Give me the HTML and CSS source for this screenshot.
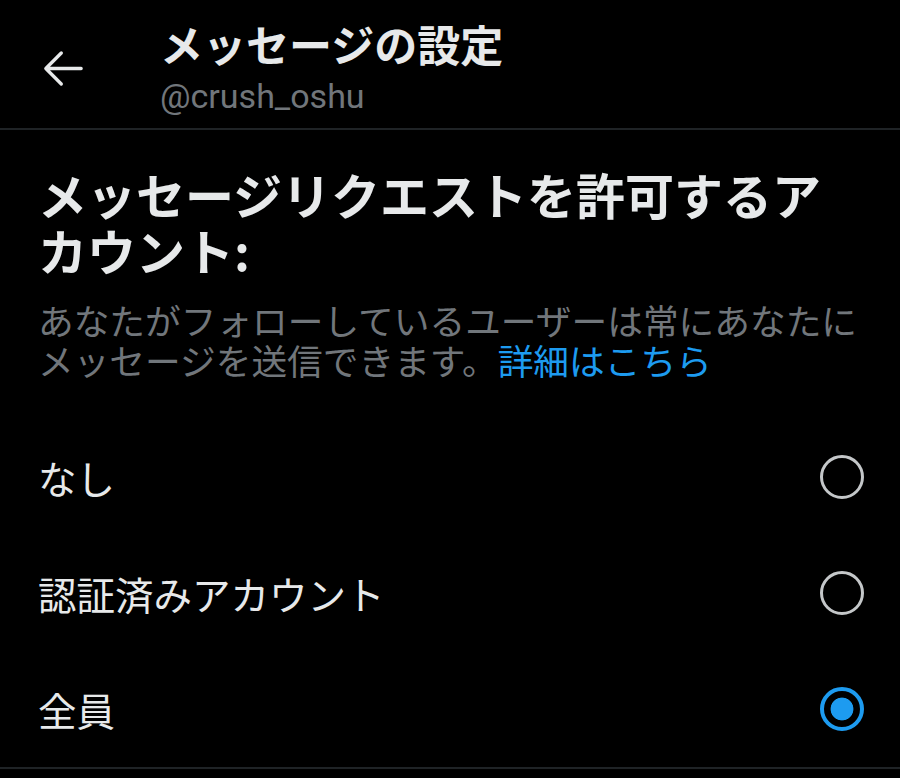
FILE: index.html
```html
<!DOCTYPE html>
<html lang="ja">
<head>
<meta charset="utf-8">
<title>メッセージの設定</title>
<link rel="stylesheet" href="styles.css">
</head>
<body>
<header class="topbar">
  <button class="back" aria-label="戻る">
    <svg viewBox="0 0 24 24" width="53" height="53"><path d="M20 12H4.5M11 5l-7 7 7 7" fill="none" stroke="currentColor" stroke-width="1.5" stroke-linecap="round" stroke-linejoin="round"/></svg>
  </button>
  <div class="titles">
    <h1 class="title">メッセージの設定</h1>
    <div class="handle">@crush_oshu</div>
  </div>
</header>
<main class="content">
  <h2 class="heading">メッセージリクエストを許可するアカウント:</h2>
  <p class="desc">あなたがフォローしているユーザーは常にあなたにメッセージを送信できます。<a class="link" href="#">詳細はこちら</a></p>
  <ul class="options">
    <li class="option"><span class="label">なし</span><span class="radio"></span></li>
    <li class="option"><span class="label">認証済みアカウント</span><span class="radio"></span></li>
    <li class="option"><span class="label">全員</span><span class="radio checked"></span></li>
  </ul>
</main>
</body>
</html>
```
FILE: styles.css
```css
* { box-sizing: border-box; }
html, body { margin: 0; background: #000; }
body {
  font-family: "Noto Sans CJK JP", "Noto Sans", sans-serif;
  color: #e7e9ea;
  width: 900px;
  height: 778px;
  overflow: hidden;
}
.topbar {
  display: flex;
  align-items: center;
  height: 130px;
  border-bottom: 2px solid #1f2326;
}
.back {
  width: 160px;
  height: 130px;
  padding: 8px 33px 0 0;
  background: none;
  border: 0;
  color: #e7e9ea;
  display: flex;
  align-items: center;
  justify-content: center;
}
.titles { display: flex; flex-direction: column; padding-top: 6px; }
.title {
  margin: 0;
  font-size: 43px;
  font-weight: 700;
  line-height: 52px;
}
.handle {
  font-family: Roboto, "Noto Sans", sans-serif;
  font-size: 34px;
  line-height: 42px;
  margin-top: 6px;
  color: #71767b;
}
.content { padding: 0 38px; }
.heading {
  margin: 36px 0 0;
  font-size: 49px;
  font-weight: 700;
  line-height: 56px;
}
.desc {
  margin: 22px 0 0;
  font-size: 35.7px;
  line-height: 40px;
  color: #71767b;
}
.link { color: #1d9bf0; text-decoration: none; }
.options {
  list-style: none;
  margin: 39px -38px 0;
  padding: 0 38px;
  border-bottom: 2px solid #1f2326;
}
.option {
  display: flex;
  align-items: center;
  justify-content: space-between;
  height: 116px;
  font-size: 38.5px;
}
.radio {
  width: 44px;
  height: 44px;
  border-radius: 50%;
  border: 3px solid #c4c7c9;
  margin-right: -2px;
}
.radio.checked {
  border: 4px solid #1d9bf0;
  background: radial-gradient(circle, #1d9bf0 0 11px, #000 11.8px);
}
```
